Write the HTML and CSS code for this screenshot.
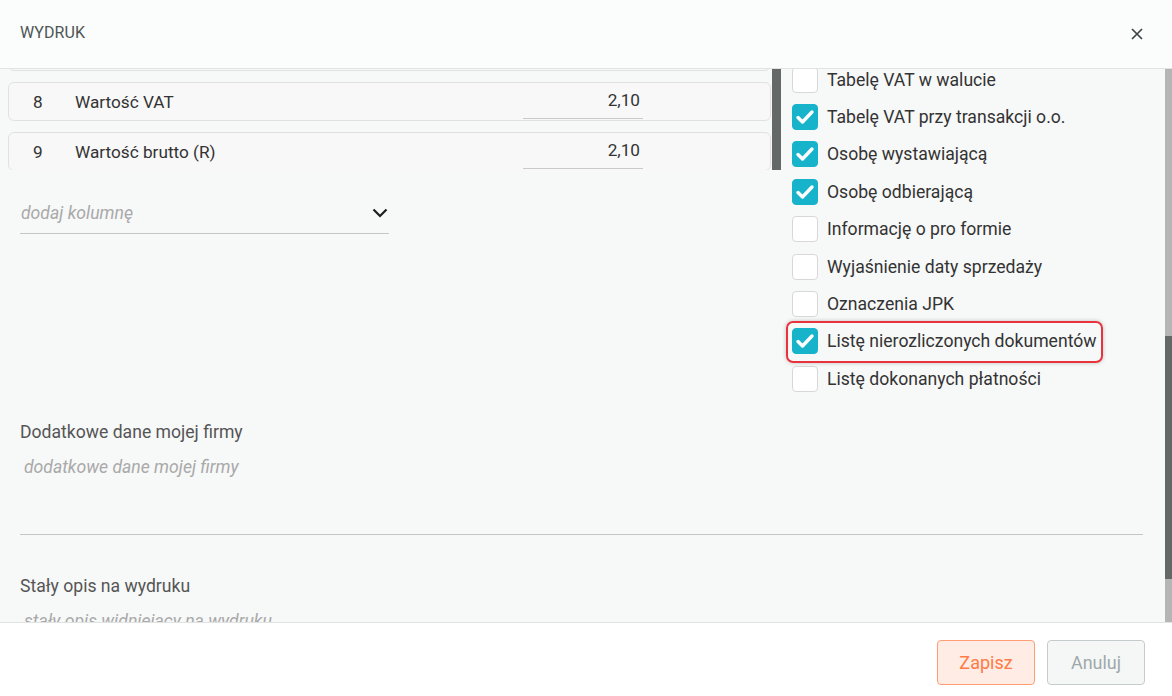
FILE: index.html
```html
<!DOCTYPE html>
<html lang="pl">
<head>
    <meta charset="UTF-8">
    <title>Wydruk</title>
    <link rel="stylesheet" href="styles.css">
</head>
<body>
    <div class="dialog">
        <div class="dialog-header">
            <span class="dialog-title">WYDRUK</span>
            <button class="close-btn" title="Zamknij">
                <svg width="12" height="12" viewBox="0 0 12 12"><path d="M1 1 L11 11 M11 1 L1 11" stroke="#3c4546" stroke-width="1.7" fill="none"/></svg>
            </button>
        </div>

        <div class="dialog-body">
            <div class="body-scroll">
                <div class="body-inner">
                    <div class="print-options">
                        <div class="columns-col">
                            <div class="columns-box">
                                <div class="columns-list">
                                    <div class="column-row">
                                        <span class="col-num"></span>
                                        <span class="col-name"></span>
                                        <span class="col-value"></span>
                                    </div>
                                    <div class="column-row">
                                        <span class="col-num">8</span>
                                        <span class="col-name">Wartość VAT</span>
                                        <span class="col-value">2,10</span>
                                    </div>
                                    <div class="column-row">
                                        <span class="col-num">9</span>
                                        <span class="col-name">Wartość brutto (R)</span>
                                        <span class="col-value">2,10</span>
                                    </div>
                                </div>
                                <div class="inner-thumb"></div>
                            </div>
                            <div class="add-column">
                                <span>dodaj kolumnę</span>
                                <svg width="16" height="10" viewBox="0 0 16 10"><polyline points="1.5,1.5 8,8 14.5,1.5" stroke="#1e1e1e" stroke-width="2.2" fill="none"/></svg>
                            </div>
                        </div>

                        <ul class="check-list">
                            <li><span class="box"></span>Tabelę VAT w walucie</li>
                            <li><span class="box checked"><svg width="26" height="26" viewBox="0 0 26 26"><polyline points="6,13.5 10.5,18 20,8" stroke="#fff" stroke-width="3.4" fill="none" stroke-linecap="round" stroke-linejoin="round"/></svg></span>Tabelę VAT przy transakcji o.o.</li>
                            <li><span class="box checked"><svg width="26" height="26" viewBox="0 0 26 26"><polyline points="6,13.5 10.5,18 20,8" stroke="#fff" stroke-width="3.4" fill="none" stroke-linecap="round" stroke-linejoin="round"/></svg></span>Osobę wystawiającą</li>
                            <li><span class="box checked"><svg width="26" height="26" viewBox="0 0 26 26"><polyline points="6,13.5 10.5,18 20,8" stroke="#fff" stroke-width="3.4" fill="none" stroke-linecap="round" stroke-linejoin="round"/></svg></span>Osobę odbierającą</li>
                            <li><span class="box"></span>Informację o pro formie</li>
                            <li><span class="box"></span>Wyjaśnienie daty sprzedaży</li>
                            <li><span class="box"></span>Oznaczenia JPK</li>
                            <li class="highlight"><span class="box checked"><svg width="26" height="26" viewBox="0 0 26 26"><polyline points="6,13.5 10.5,18 20,8" stroke="#fff" stroke-width="3.4" fill="none" stroke-linecap="round" stroke-linejoin="round"/></svg></span>Listę nierozliczonych dokumentów</li>
                            <li><span class="box"></span>Listę dokonanych płatności</li>
                        </ul>
                    </div>

                    <div class="field">
                        <div class="field-label">Dodatkowe dane mojej firmy</div>
                        <div class="field-input">dodatkowe dane mojej firmy</div>
                    </div>
                    <div class="field">
                        <div class="field-label">Stały opis na wydruku</div>
                        <div class="field-input">stały opis widniejący na wydruku</div>
                    </div>
                </div>
            </div>
            <div class="scrollbar"><div class="thumb"></div></div>
        </div>

        <div class="dialog-footer">
            <button class="btn btn-save">Zapisz</button>
            <button class="btn btn-cancel">Anuluj</button>
        </div>
    </div>
</body>
</html>
```

FILE: styles.css
```css
html, body {margin: 0; padding: 0;}
body {font-family: Roboto, "Liberation Sans", sans-serif; font-size: 17.6px; color: #333;}

.dialog {width: 1172px; height: 696px; display: flex; flex-direction: column; background: #f7f8f8;}

.dialog-header {height: 68px; flex-shrink: 0; display: flex; align-items: center; justify-content: space-between; padding: 0 28px 0 20px; background: #fbfcfc; border-bottom: 1px solid #e1e3e3;}
.dialog-title {font-size: 16px; line-height: 20px; margin-top: -2px; color: #4d5556; letter-spacing: 0.1px;}
.close-btn {border: none; background: none; padding: 0; width: 14px; height: 14px; display: flex; align-items: center; justify-content: center; cursor: pointer;}

.dialog-body {flex: 1; min-height: 0; display: flex; overflow: hidden;}
.body-scroll {flex: 1; overflow: hidden; padding: 0 22px 0 20px;}
.body-inner {margin-top: -20px;}

.scrollbar {width: 7px; flex-shrink: 0; background: #b3b6b5;}
.scrollbar .thumb {margin-top: 267px; height: 243px; background: #646968;}

.print-options {display: flex; gap: 11px; margin-bottom: 24px;}
.columns-col {width: 761px; flex-shrink: 0;}
.columns-box {display: flex; height: 121px; margin-left: -12px; overflow: hidden;}
.columns-list {flex: 1; display: flex; flex-direction: column; justify-content: flex-end; gap: 11px; margin-bottom: -1px;}
.inner-thumb {width: 9px; margin-left: 1px; background: #646968;}

.column-row {height: 39px; flex-shrink: 0; box-sizing: border-box; display: flex; align-items: center; padding-left: 24px; border: 1px solid #e1e1e1; border-radius: 6px; background: #f8f8f8; font-size: 17.2px; color: #333;}
.col-num {width: 42px;}
.col-name {width: 448px;}
.col-value {width: 120px; align-self: stretch; box-sizing: border-box; display: flex; align-items: center; justify-content: flex-end; padding: 0 3px 1px 0; margin-bottom: 1px; border-bottom: 1px solid #cacaca;}

.add-column {margin-top: 25px; width: 369px; height: 39px; box-sizing: border-box; display: flex; align-items: center; justify-content: space-between; padding: 0 1px 2px; border-bottom: 1px solid #c6c6c6; font-style: italic; color: #a9a9a9;}

.check-list {list-style: none; margin: 0; padding: 12px 0 0;}
.check-list li {height: 37.4px; display: flex; align-items: center; gap: 9px; width: fit-content; color: #333;}
.box {width: 26px; height: 26px; box-sizing: border-box; border: 1px solid #d8d8d8; border-radius: 4px; background: #fff; display: flex;}
.box.checked {background: #17b3ca; border-color: #17b3ca;}
.box.checked svg {margin: -1px;}
.check-list li.highlight {position: relative;}
.check-list li.highlight::before {content: ''; position: absolute; left: -6px; right: -6px; top: -2px; bottom: -3px; border: 2px solid #e8323c; border-radius: 7px; box-shadow: 0 0 4px rgba(0, 0, 0, 0.22);}

.field + .field {margin-top: 41px;}
.field-label {line-height: 20px; color: #555;}
.field-input {margin-top: 5px; height: 88px; box-sizing: border-box; padding: 10px 4px; line-height: 20px; border-bottom: 1px solid #c6c6c6; font-style: italic; color: #a9a9a9;}

.dialog-footer {height: 74px; flex-shrink: 0; box-sizing: border-box; display: flex; justify-content: flex-end; align-items: flex-start; gap: 12px; padding: 17px 27px 0 0; background: #fff; border-top: 1px solid #e1e3e3;}
.btn {width: 98px; height: 45px; border-radius: 4px; font-family: Roboto, "Liberation Sans", sans-serif; font-size: 18px; cursor: pointer;}
.btn-save {background: #ffede5; border: 1px solid #ff9e74; color: #ff7a45;}
.btn-cancel {background: #f5f7f7; border: 1px solid #c5cccd; color: #9ea9ab;}
```
